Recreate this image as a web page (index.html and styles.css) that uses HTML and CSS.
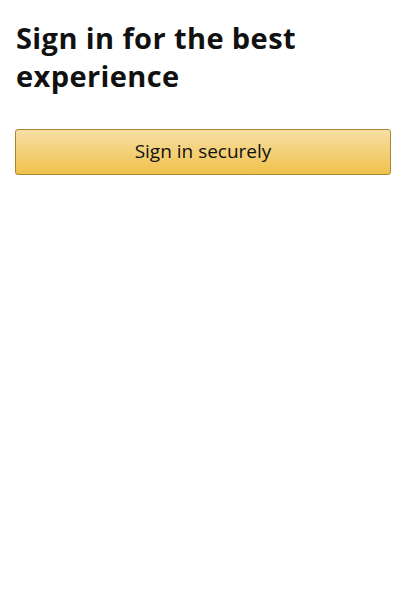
FILE: index.html
```html
<!DOCTYPE html>
<html>
<head>
<meta charset="utf-8">
<link rel="stylesheet" href="styles.css">
</head>
<body>
<main class="page">
  <h1 class="title">Sign in for the best experience</h1>
  <button class="btn">Sign in securely</button>
</main>
</body>
</html>
```
FILE: styles.css
```css
html, body { margin: 0; padding: 0; background: #fff; }
body { font-family: "Open Sans", "Noto Sans", sans-serif; color: #111; }
.page { padding: 19px 19px 18px 15px; display: flex; flex-direction: column; gap: 34px; }
.title { margin: 0 0 0 1px; font-size: 29px; font-weight: 700; line-height: 38px; letter-spacing: 0.4px; color: #111; }
.btn {
  width: 100%; height: 46px; box-sizing: border-box;
  border: 1px solid #a88734; border-radius: 3px;
  background: linear-gradient(to bottom, #f7dfa5, #f0c14b);
  font-family: inherit; font-size: 19px; color: #111; padding: 0 0 2px;
}
```
